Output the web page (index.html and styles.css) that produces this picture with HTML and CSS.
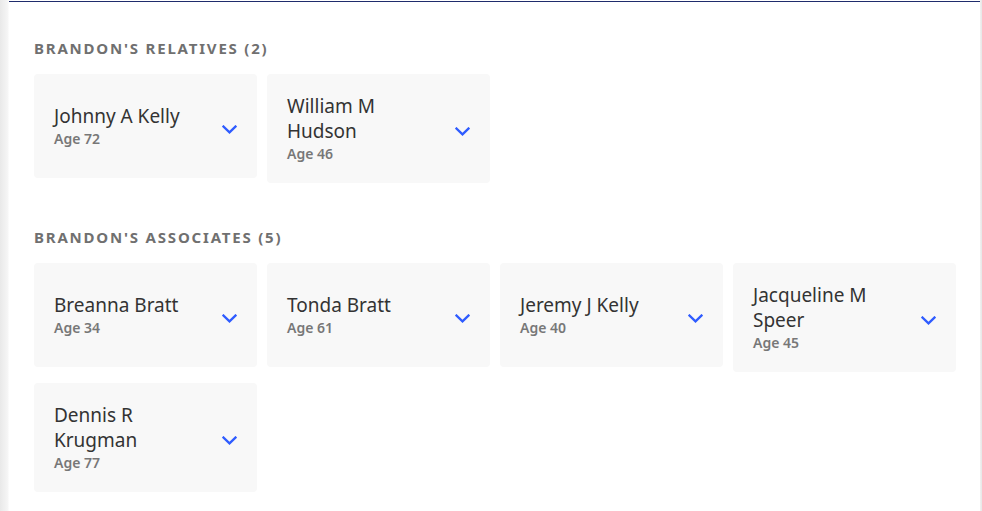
FILE: index.html
```html
<!DOCTYPE html>
<html>
<head>
<meta charset="utf-8">
<link rel="stylesheet" href="styles.css">
</head>
<body>
<div class="panel">
  <section class="section">
    <h2 class="heading">BRANDON'S RELATIVES (2)</h2>
    <div class="grid">
      <div class="card"><div class="info"><div class="name">Johnny A Kelly</div><div class="age">Age 72</div></div><svg class="chev" width="15" height="9" viewBox="0 0 15 9"><path d="M1.5 1.5 L7.5 7.3 L13.5 1.5" /></svg></div>
      <div class="card"><div class="info"><div class="name">William M Hudson</div><div class="age">Age 46</div></div><svg class="chev" width="15" height="9" viewBox="0 0 15 9"><path d="M1.5 1.5 L7.5 7.3 L13.5 1.5" /></svg></div>
    </div>
  </section>
  <section class="section second">
    <h2 class="heading">BRANDON'S ASSOCIATES (5)</h2>
    <div class="grid">
      <div class="card"><div class="info"><div class="name">Breanna Bratt</div><div class="age">Age 34</div></div><svg class="chev" width="15" height="9" viewBox="0 0 15 9"><path d="M1.5 1.5 L7.5 7.3 L13.5 1.5" /></svg></div>
      <div class="card"><div class="info"><div class="name">Tonda Bratt</div><div class="age">Age 61</div></div><svg class="chev" width="15" height="9" viewBox="0 0 15 9"><path d="M1.5 1.5 L7.5 7.3 L13.5 1.5" /></svg></div>
      <div class="card"><div class="info"><div class="name">Jeremy J Kelly</div><div class="age">Age 40</div></div><svg class="chev" width="15" height="9" viewBox="0 0 15 9"><path d="M1.5 1.5 L7.5 7.3 L13.5 1.5" /></svg></div>
      <div class="card"><div class="info"><div class="name">Jacqueline M Speer</div><div class="age">Age 45</div></div><svg class="chev" width="15" height="9" viewBox="0 0 15 9"><path d="M1.5 1.5 L7.5 7.3 L13.5 1.5" /></svg></div>
      <div class="card"><div class="info"><div class="name">Dennis R Krugman</div><div class="age">Age 77</div></div><svg class="chev" width="15" height="9" viewBox="0 0 15 9"><path d="M1.5 1.5 L7.5 7.3 L13.5 1.5" /></svg></div>
    </div>
  </section>
</div>
</body>
</html>
```
FILE: styles.css
```css
html, body {
  margin: 0;
  padding: 0;
}
body {
  background: linear-gradient(to right, #e9e9e9 0px, #f6f6f6 8px, #ffffff 9px, #ffffff 980px, #dedede 981px, #f4f4f4 982px);
  min-height: 511px;
  font-family: "Noto Sans", "Open Sans", sans-serif;
  overflow: hidden;
}
.panel {
  margin-left: 9px;
  width: 971px;
  box-sizing: border-box;
  margin-top: 1px;
  border-top: 1px solid #1f2c6c;
  background: #ffffff;
  padding: 37px 24px 40px 25px;
  min-height: 510px;
}
.heading {
  margin: 0 0 17px 0;
  font-size: 15px;
  line-height: 18px;
  font-weight: 700;
  letter-spacing: 1.8px;
  color: #707070;
}
.second {
  margin-top: 45px;
}
.grid {
  display: grid;
  grid-template-columns: repeat(4, 223px);
  gap: 11px 10px;
  align-items: start;
}
.card {
  box-sizing: border-box;
  min-height: 104px;
  background: #f8f8f8;
  border-radius: 4px;
  padding: 20px;
  display: flex;
  align-items: center;
}
.info {
  flex: 1;
  min-width: 0;
  margin-right: 30px;
}
.name {
  font-size: 19px;
  line-height: 25px;
  color: #333333;
}
.age {
  font-size: 14px;
  line-height: 19px;
  font-weight: 600;
  color: #777777;
}
.chev {
  flex: none;
  margin-top: 6px;
}
.chev path {
  fill: none;
  stroke: #2f5cff;
  stroke-width: 2.3;
  stroke-linecap: square;
}
```
